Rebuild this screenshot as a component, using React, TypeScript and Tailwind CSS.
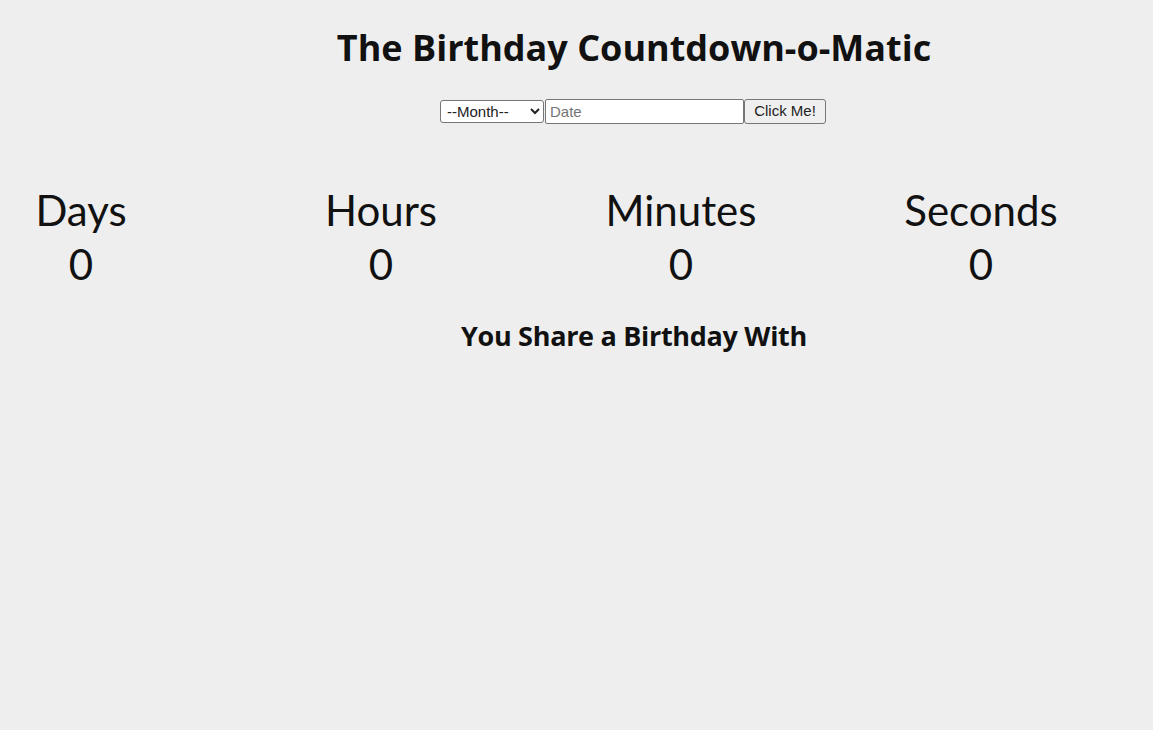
import React from "react";

export default function App() {
  const units = ["Days", "Hours", "Minutes", "Seconds"];
  return (
    <div className="min-h-[730px] w-full bg-[#eeeeee] text-[#111111]">
      <div className="flex flex-col items-center pl-[115px]">
        <h1 className="mt-[26px] text-[36px] font-bold leading-[44px] tracking-[0px] [font-family:'Open_Sans',sans-serif]">
          The Birthday Countdown-o-Matic
        </h1>
        <div className="mr-[2px] mt-[29px] flex items-center [font-family:'Liberation_Sans',Arial,sans-serif] text-[15px]">
          <select className="h-[23px] w-[104px] rounded-[3px] border border-[#767676] bg-white pl-[2px] text-[15px] text-[#222222]">
            <option>--Month--</option>
          </select>
          <input
            className="ml-[1px] h-[25px] w-[199px] rounded-[2px] border border-[#767676] bg-white px-[4px] text-[15px] text-black placeholder:text-[#757575] outline-none"
            placeholder="Date"
          />
          <button className="h-[25px] w-[82px] rounded-[3px] border border-[#767676] bg-[#efefef] text-[15px] text-[#222222]">
            Click Me!
          </button>
        </div>
      </div>
      <div className="mt-[59px] flex gap-[138px] [font-family:Lato,sans-serif]">
        {units.map((u) => (
          <div key={u} className="flex w-[162px] flex-col items-center text-[42px] leading-[54px]">
            <span className="whitespace-nowrap">{u}</span>
            <span>0</span>
          </div>
        ))}
      </div>
      <div className="flex flex-col items-center pl-[115px]">
        <h2 className="mt-[27px] text-[27px] font-bold leading-[36px] tracking-[-0.3px] [font-family:'Open_Sans',sans-serif]">
          You Share a Birthday With
        </h2>
      </div>
    </div>
  );
}
